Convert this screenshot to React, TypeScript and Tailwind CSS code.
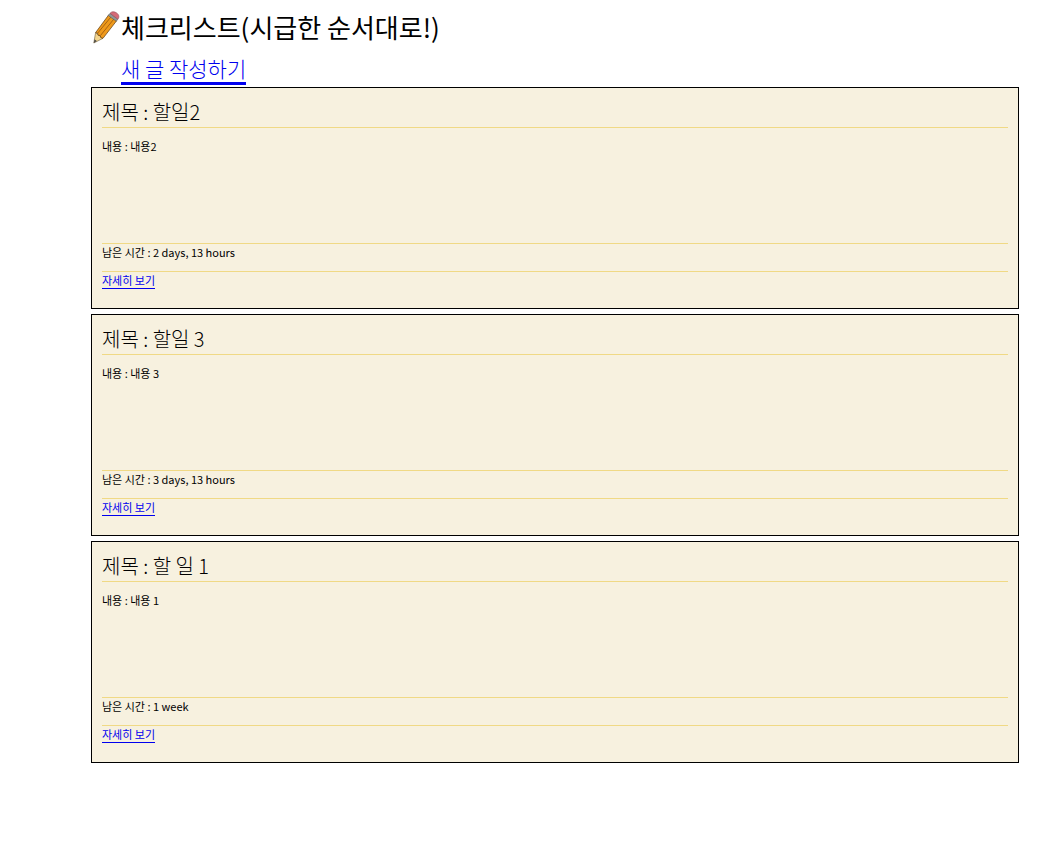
type Task = {
  id: number;
  title: string;
  content: string;
  remaining: string;
};

const tasks: Task[] = [
  { id: 2, title: "할일2", content: "내용2", remaining: "2 days, 13 hours" },
  { id: 3, title: "할일 3", content: "내용 3", remaining: "3 days, 13 hours" },
  { id: 1, title: "할 일 1", content: "내용 1", remaining: "1 week" },
];

function PencilIcon() {
  return (
    <svg viewBox="0 0 30 34" className="h-[34px] w-[30px] shrink-0" aria-hidden="true">
      <g strokeLinejoin="round">
        <path d="M2.8 33 4.6 22.6 12 28.3Z" fill="#f3d58e" stroke="#6b5a3a" strokeWidth="0.6" />
        <path d="M2.8 33 3.5 29.2 5.8 31Z" fill="#4a4a48" />
        <path d="M4.6 22.6 17.6 5 25.6 10.8 12 28.3 9.8 27.7 9.2 25.7 7 25.2 6.6 23.2Z" fill="#ef9a1c" stroke="#5c3b12" strokeWidth="0.7" />
        <path d="M6.8 23 20 6.9M9.4 25.6 23 8.9" fill="none" stroke="#96560f" strokeWidth="0.8" />
        <path d="M17.2 5.5 19 3.3 26.9 9.2 25.2 11.3Z" fill="#8f9696" stroke="#53595a" strokeWidth="0.5" />
        <path d="M19 3.3C20.5 1.4 23.1 1.2 25.6 2.9 28.2 4.7 28.5 7.2 26.9 9.2Z" fill="#d56a77" stroke="#8e4650" strokeWidth="0.6" />
      </g>
    </svg>
  );
}

function TaskCard({ task }: { task: Task }) {
  return (
    <article className="border border-black bg-[#f7f1df] p-[10px] text-[11px] leading-4">
      <h2 className="h-[30px] border-b border-[#f0d985] text-[20px] leading-[28px] font-light">
        제목 : {task.title}
      </h2>
      <p className="h-[116px] border-b border-[#f0d985] pt-[10px]">내용 : {task.content}</p>
      <p className="h-7 border-b border-[#f0d985]">남은 시간 : {task.remaining}</p>
      <div className="flex h-[26px] items-start">
        <a href={`#task-${task.id}`} className="border-b border-[#0000ee] text-[#0000ee]">
          자세히 보기
        </a>
      </div>
    </article>
  );
}

export default function App() {
  return (
    <main className="mr-7 ml-[91px] pt-[10px] font-['Noto_Sans_CJK_KR',sans-serif] text-black">
      <h1 className="flex h-[34px] items-center text-[26px] leading-[34px]">
        <PencilIcon />
        <span>체크리스트(시급한 순서대로!)</span>
      </h1>
      <nav className="flex h-[43px] items-end pb-[2px] pl-[30px]">
        <a href="#new" className="border-b-[3px] border-[#0000ee] text-[21px] leading-[28px] font-light text-[#0000ee]">
          새 글 작성하기
        </a>
      </nav>
      <section className="flex flex-col gap-[5px]">
        {tasks.map((task) => (
          <TaskCard key={task.id} task={task} />
        ))}
      </section>
    </main>
  );
}
